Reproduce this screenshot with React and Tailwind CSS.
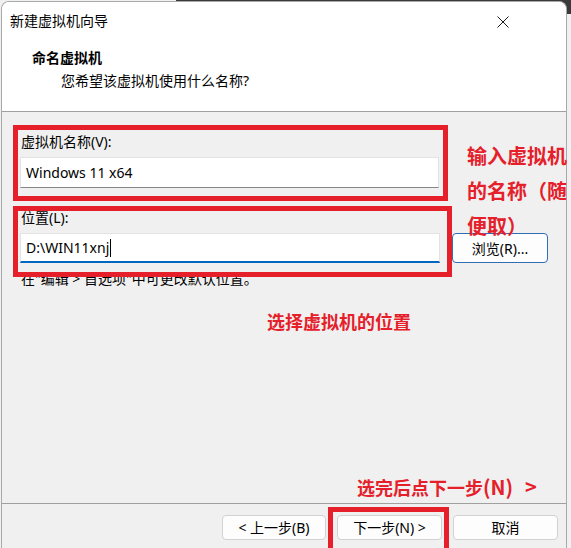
export default function App() {
  const font = "font-['Noto_Sans','Noto_Sans_CJK_SC',sans-serif]";
  const cjkBold = "font-['Noto_Sans_CJK_SC','Noto_Sans',sans-serif] font-bold text-[#e5202b]";

  return (
    <div className={`relative w-[571px] h-[548px] overflow-hidden bg-[#f0f0f0] text-black ${font}`}>
      {/* dark desktop behind the dialog's top-right */}
      <div className="absolute top-0 left-[176px] right-0 h-[14px] bg-[#3a3a3a]" />

      <div className="relative z-10 ml-px mt-px flex h-[547px] w-[566px] flex-col overflow-hidden rounded-t-[8px] border border-b-0 border-[#a9a9a9] bg-[#f0f0f0]">
        {/* header */}
        <div className="h-[110px] shrink-0 border-b border-[#a0a0a0] bg-white">
          <div className="flex items-center justify-between pl-[8px] pr-[57px] pt-[9px]">
            <span className="text-[14px] leading-[20px]">新建虚拟机向导</span>
            <svg width="12" height="12" viewBox="0 0 12 12" className="mt-px">
              <path d="M0.5 0.5 L11.5 11.5 M11.5 0.5 L0.5 11.5" stroke="#1a1a1a" strokeWidth="1" />
            </svg>
          </div>
          <div className="mt-[17px] pl-[30px] text-[14px] font-bold leading-[20px]">命名虚拟机</div>
          <div className="mt-[3px] pl-[59px] text-[14px] leading-[20px]">您希望该虚拟机使用什么名称?</div>
        </div>

        {/* body */}
        <div className="flex-1 pl-[18px] pt-[20px]">
          <div className="text-[14px] leading-[20px] pl-px">虚拟机名称(V):</div>
          <div className="mt-[5px] flex h-[31px] w-[419px] items-center border border-b-[#868686] border-[#e3e3e3] bg-white pl-[5px] text-[14px]">
            Windows 11 x64
          </div>
          <div className="mt-[20px] text-[14px] leading-[20px] pl-px">位置(L):</div>
          <div className="mt-[5px] flex items-center">
            <div className="flex h-[30px] w-[420px] items-center border border-b-2 border-[#e3e3e3] border-b-[#0067c0] bg-white pl-[5px] text-[14px]">
              D:\WIN11xnj
              <span className="ml-px inline-block h-[18px] w-px bg-black" />
            </div>
            <button className="ml-[12px] h-[30px] w-[96px] rounded-[4px] border border-[#2f6db5] bg-[#fdfdfd] text-[14px]">
              浏览(R)...
            </button>
          </div>
          <div className="mt-[6px] text-[14px] leading-[20px] pl-px">在"编辑 &gt; 首选项"中可更改默认位置。</div>
        </div>

        {/* footer */}
        <div className="flex h-[45px] shrink-0 justify-end gap-[11px] border-t border-[#a0a0a0] pr-[8px] pt-[11px]">
          <button className="h-[25px] w-[104px] rounded-[4px] border border-[#d2d2d2] bg-[#fdfdfd] text-[14px] leading-none">&lt; 上一步(B)</button>
          <button className="h-[25px] w-[105px] rounded-[4px] border border-[#d2d2d2] bg-[#fdfdfd] text-[14px] leading-none">下一步(N) &gt;</button>
          <button className="h-[25px] w-[105px] rounded-[4px] border border-[#d2d2d2] bg-[#fdfdfd] text-[14px] leading-none">取消</button>
        </div>
      </div>

      {/* annotations */}
      <div className="absolute z-20 left-[13px] top-[125px] h-[76px] w-[435px] border-[5px] border-[#e5202b]" />
      <div className="absolute z-20 left-[13px] top-[206px] h-[71px] w-[439px] border-[5px] border-[#e5202b]" />
      <div className="absolute z-20 left-[328px] top-[507px] h-[50px] w-[121px] border-[5px] border-[#e5202b]" />

      <div className={`absolute z-20 left-[467px] top-[138px] text-[20px] leading-[35px] ${cjkBold}`}>
        <div>输入虚拟机</div>
        <div>的名称（随</div>
        <div>便取）</div>
      </div>
      <div className={`absolute z-20 left-[267px] top-[309px] text-[18px] leading-[24px] ${cjkBold}`}>选择虚拟机的位置</div>
      <div className={`absolute z-20 left-[357px] top-[475px] flex items-baseline text-[18px] leading-[24px] ${cjkBold}`}>
        <span>选完后点下一步</span>
        <span className="text-[20px]">(N)</span>
        <span className="ml-[12px] text-[20px]">&gt;</span>
      </div>
    </div>
  );
}
